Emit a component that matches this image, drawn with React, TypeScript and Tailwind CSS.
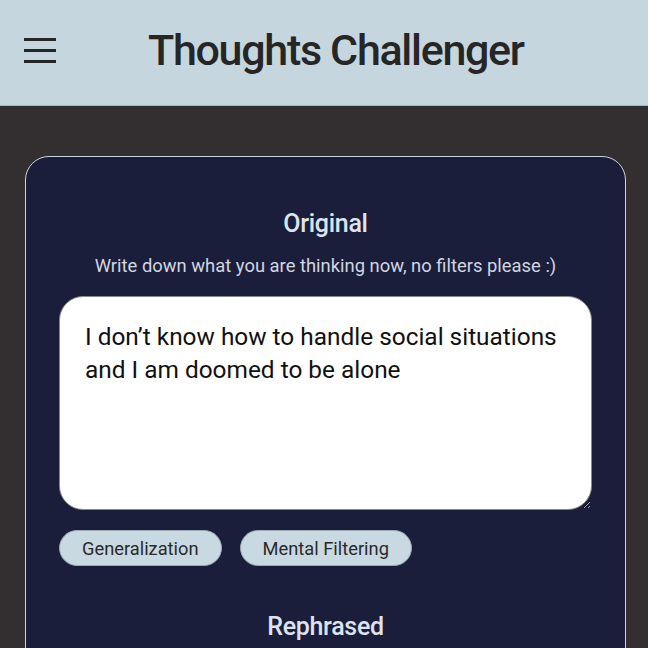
export default function App() {
  return (
    <div
      className="h-[648px] w-[648px] overflow-hidden bg-[#332e2f]"
      style={{ fontFamily: 'Roboto, "Noto Sans", sans-serif' }}
    >
      <header className="flex h-[106px] items-center bg-[#c6d6de] border-b border-[#aab8bf]">
        <button className="ml-[24px] -mt-[4px] flex w-[32px] flex-col gap-[8px]">
          <span className="h-[3px] w-full bg-[#262626]" />
          <span className="h-[3px] w-full bg-[#262626]" />
          <span className="h-[3px] w-full bg-[#262626]" />
        </button>
        <h1 className="ml-[92px] -mt-[4px] text-[43px] leading-none font-medium text-[#262626] tracking-[-1.3px]">
          Thoughts Challenger
        </h1>
      </header>

      <div className="pl-[25px] pr-[22px] pt-[50px]">
        <div className="rounded-[24px] border-[1.5px] border-[#c9d6dc] bg-[#1b1e3a] px-[33px] pt-[54px] pb-[40px]">
          <h2 className="text-center text-[25px] leading-none font-medium text-[#dde3ee] tracking-[-0.3px]">
            Original
          </h2>
          <p className="mt-[21px] text-center text-[18.4px] leading-none text-[#d0d6e2]">
            Write down what you are thinking now, no filters please :)
          </p>
          <textarea
            className="mt-[21px] block h-[214px] w-full resize-y rounded-[24px] border border-[#888] bg-white px-[25px] pt-[23px] text-[24.4px] leading-[33px] text-[#111] outline-none"
            defaultValue="I don’t know how to handle social situations and I am doomed to be alone"
          />
          <div className="mt-[20px] flex gap-[18px]">
            <span className="flex h-[36px] items-center rounded-full border border-[#9aa8b0] bg-[#c9d9e1] px-[22px] text-[18.3px] text-[#2a2a2a]">
              Generalization
            </span>
            <span className="flex h-[36px] items-center rounded-full border border-[#9aa8b0] bg-[#c9d9e1] px-[22px] text-[18.3px] text-[#2a2a2a]">
              Mental Filtering
            </span>
          </div>
          <h2 className="mt-[48px] text-center text-[25px] leading-none font-medium text-[#dde3ee] tracking-[-0.3px]">
            Rephrased
          </h2>
        </div>
      </div>
    </div>
  );
}
